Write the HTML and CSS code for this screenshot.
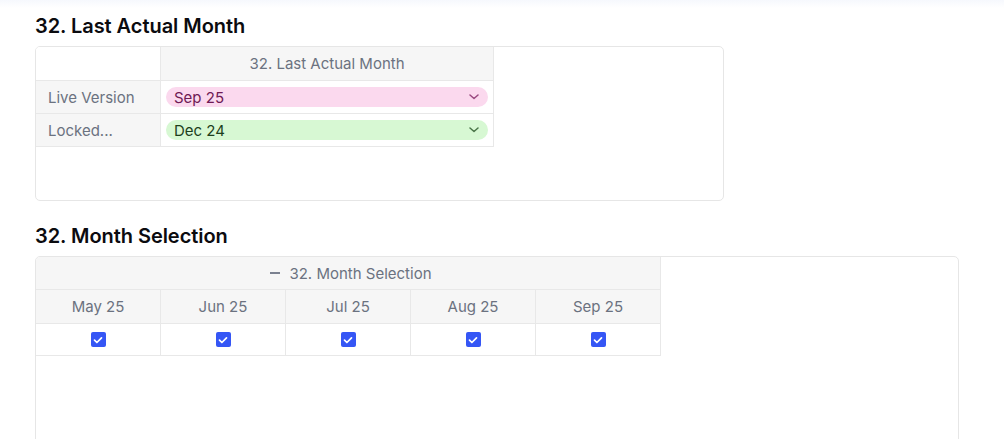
FILE: index.html
```html
<!DOCTYPE html>
<html lang="en">
<head>
<meta charset="utf-8">
<link rel="stylesheet" href="styles.css">
</head>
<body>
<div class="topshade"></div>
<main class="page">
  <section class="block">
    <h2 class="title">32. Last Actual Month</h2>
    <div class="card card-small">
      <div class="grid grid-lam">
        <div class="cell corner tall"></div>
        <div class="cell head tall">32. Last Actual Month</div>
        <div class="cell label">Live Version</div>
        <div class="cell value">
          <div class="pill pill-pink"><span>Sep 25</span>
            <svg class="chev" viewBox="0 0 10 6" width="10" height="6"><path d="M1 1l4 3.5L9 1" fill="none" stroke="currentColor" stroke-width="1.5" stroke-linecap="round" stroke-linejoin="round"/></svg>
          </div>
        </div>
        <div class="cell label">Locked...</div>
        <div class="cell value">
          <div class="pill pill-green"><span>Dec 24</span>
            <svg class="chev" viewBox="0 0 10 6" width="10" height="6"><path d="M1 1l4 3.5L9 1" fill="none" stroke="currentColor" stroke-width="1.5" stroke-linecap="round" stroke-linejoin="round"/></svg>
          </div>
        </div>
      </div>
    </div>
  </section>

  <section class="block block2">
    <h2 class="title">32. Month Selection</h2>
    <div class="card card-large">
      <div class="grid grid-ms">
        <div class="cell head group"><span class="dash"></span>32. Month Selection</div>
        <div class="cell head month tall">May 25</div>
        <div class="cell head month tall">Jun 25</div>
        <div class="cell head month tall">Jul 25</div>
        <div class="cell head month tall">Aug 25</div>
        <div class="cell head month tall">Sep 25</div>
        <div class="cell check short"><span class="box"><svg viewBox="0 0 14 14" width="14" height="14"><path d="M3.5 7.2l2.4 2.3 4.6-4.7" fill="none" stroke="#fff" stroke-width="1.7" stroke-linecap="round" stroke-linejoin="round"/></svg></span></div>
        <div class="cell check short"><span class="box"><svg viewBox="0 0 14 14" width="14" height="14"><path d="M3.5 7.2l2.4 2.3 4.6-4.7" fill="none" stroke="#fff" stroke-width="1.7" stroke-linecap="round" stroke-linejoin="round"/></svg></span></div>
        <div class="cell check short"><span class="box"><svg viewBox="0 0 14 14" width="14" height="14"><path d="M3.5 7.2l2.4 2.3 4.6-4.7" fill="none" stroke="#fff" stroke-width="1.7" stroke-linecap="round" stroke-linejoin="round"/></svg></span></div>
        <div class="cell check short"><span class="box"><svg viewBox="0 0 14 14" width="14" height="14"><path d="M3.5 7.2l2.4 2.3 4.6-4.7" fill="none" stroke="#fff" stroke-width="1.7" stroke-linecap="round" stroke-linejoin="round"/></svg></span></div>
        <div class="cell check short"><span class="box"><svg viewBox="0 0 14 14" width="14" height="14"><path d="M3.5 7.2l2.4 2.3 4.6-4.7" fill="none" stroke="#fff" stroke-width="1.7" stroke-linecap="round" stroke-linejoin="round"/></svg></span></div>
      </div>
    </div>
  </section>
</main>
</body>
</html>
```

FILE: styles.css
```css
* { box-sizing: border-box; }
html, body { margin: 0; padding: 0; background: #fff; }
body {
  font-family: Inter, "Noto Sans", "Liberation Sans", sans-serif;
  color: #111;
  overflow: hidden;
  height: 439px;
}
.topshade {
  height: 8px;
  background: linear-gradient(to bottom, #f6f8fd, #ffffff);
}
.page {
  padding: 4px 0 0 35px;
}
.title {
  margin: 0 0 6px 0;
  font-size: 20px;
  line-height: 28px;
  font-weight: 600;
  color: #0b0b0f;
  letter-spacing: -0.05px;
}
.block2 { margin-top: 21px; }
.card {
  border: 1px solid #e6e6e6;
  border-radius: 5px;
  background: #fff;
  overflow: hidden;
}
.card-small { width: 689px; height: 155px; }
.card-large { width: 924px; height: 200px; }
.grid { display: grid; }
.grid-lam { grid-template-columns: 125px 333px; width: 458px; }
.grid-ms { grid-template-columns: repeat(5, 125px); width: 625px; }
.cell {
  height: 33px;
  border-bottom: 1px solid #e8e8e8;
  border-right: 1px solid #e8e8e8;
  display: flex;
  align-items: center;
  font-size: 15px;
  color: #6b7280;
}
.cell.tall { height: 34px; }
.cell.short { height: 32px; }
.corner { background: #fff; }
.head {
  background: #f6f6f6;
  justify-content: center;
}
.label {
  background: #f6f6f6;
  padding-left: 12px;
}
.value { padding: 0 5px; }
.pill {
  flex: 1;
  height: 20px;
  border-radius: 10px;
  display: flex;
  align-items: center;
  justify-content: space-between;
  padding: 0 9px 0 8px;
  font-size: 15px;
}
.pill-pink { background: #fbd9ee; color: #6f1a55; }
.pill-pink .chev { color: #9a4a80; }
.pill-green { background: #d7f8d3; color: #1d3f1c; }
.pill-green .chev { color: #4a7448; }
.group { grid-column: 1 / -1; padding-left: 6px; }
.dash {
  display: inline-block;
  width: 10px;
  height: 1.5px;
  background: #7b8190;
  margin-right: 9px;
}
.check { justify-content: center; background: #fff; }
.box {
  width: 15px;
  height: 15px;
  border-radius: 2px;
  background: #3556f5;
  display: flex;
  align-items: center;
  justify-content: center;
}
.box svg { display: block; }
```
